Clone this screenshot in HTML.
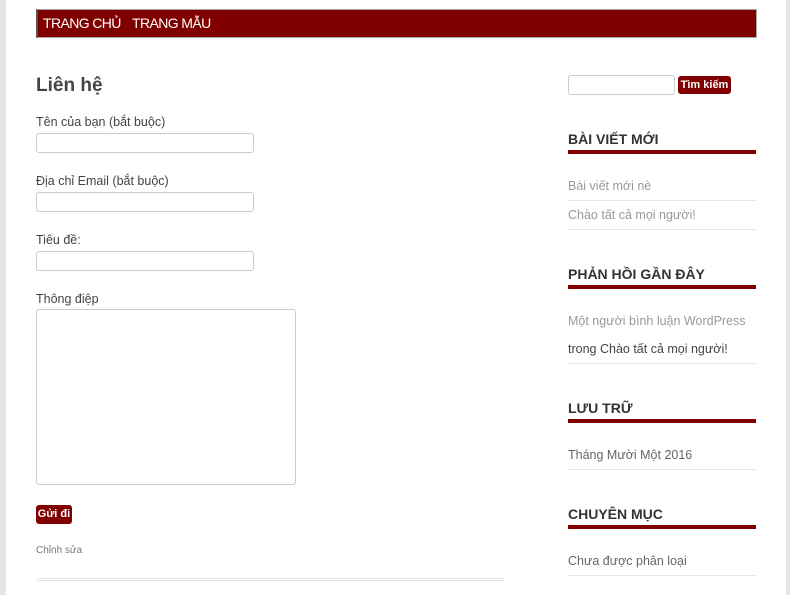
<!DOCTYPE html>
<html><head><meta charset="utf-8"><style>
*{margin:0;padding:0;box-sizing:border-box}
body{width:790px;height:595px;overflow:hidden;background:#fff;font-family:"Liberation Sans","DejaVu Sans",sans-serif;position:relative;color:#444}
.gl{position:absolute;left:0;top:0;width:6px;height:595px;background:#e6e6e6}
.gr{position:absolute;left:786px;top:0;width:4px;height:595px;background:#e6e6e6}
.nav{position:absolute;left:36px;top:9px;width:721px;height:29px;background:#800000;border:1px solid #aaa;border-left:2px solid #555}
.nav span{position:absolute;top:5px;color:#fff;font-size:14px;letter-spacing:-0.6px}
.a{position:absolute;white-space:nowrap}
.lbl{font-size:12.5px;color:#444}
.in{position:absolute;border:1px solid #ccc;border-radius:3px;background:#fff}
.btn{position:absolute;background:#800000;color:#fff;font-weight:bold;font-size:11px;border-radius:3px;text-align:center}
.h{font-size:14px;font-weight:bold;color:#333}
.bar{position:absolute;left:568px;width:188px;height:4px;background:#800000}
.ln{position:absolute;left:568px;width:188px;height:1px;background:#e6e6e6}
.li{font-size:12.5px}
</style></head><body>
<div class="gl"></div><div class="gr"></div>
<div class="nav"><span style="left:5px">TRANG CHỦ</span><span style="left:94px">TRANG MẪU</span></div>
<div class="a" style="left:36px;top:75px;font-size:19px;font-weight:bold;color:#444">Liên hệ</div>
<div class="a lbl" style="left:36px;top:115px">Tên của bạn (bắt buộc)</div>
<div class="in" style="left:36px;top:133px;width:218px;height:20px"></div>
<div class="a lbl" style="left:36px;top:174px">Địa chỉ Email (bắt buộc)</div>
<div class="in" style="left:36px;top:192px;width:218px;height:20px"></div>
<div class="a lbl" style="left:36px;top:233px">Tiêu đề:</div>
<div class="in" style="left:36px;top:251px;width:218px;height:20px"></div>
<div class="a lbl" style="left:36px;top:292px">Thông điệp</div>
<div class="in" style="left:36px;top:309px;width:260px;height:176px"></div>
<div class="btn" style="left:36px;top:505px;width:36px;height:19px;line-height:19px">Gửi đi</div>
<div class="a" style="left:36px;top:545px;font-size:10px;color:#777">Chỉnh sửa</div>
<div style="position:absolute;left:36px;top:578px;width:468px;height:3px;border-top:1px solid #e6e6e6;border-bottom:1px solid #e6e6e6"></div>

<div class="in" style="left:568px;top:75px;width:107px;height:20px"></div>
<div class="btn" style="left:678px;top:76px;width:53px;height:18px;line-height:18px">Tìm kiếm</div>

<div class="a h" style="left:568px;top:131px">BÀI VIẾT MỚI</div>
<div class="bar" style="top:150px"></div>
<div class="a li" style="left:568px;top:179px;color:#999">Bài viết mới nè</div>
<div class="ln" style="top:200px"></div>
<div class="a li" style="left:568px;top:208px;color:#999">Chào tất cả mọi người!</div>
<div class="ln" style="top:229px"></div>

<div class="a h" style="left:568px;top:266px">PHẢN HỒI GẦN ĐÂY</div>
<div class="bar" style="top:285px"></div>
<div class="a li" style="left:568px;top:314px;color:#999">Một người bình luận WordPress</div>
<div class="a li" style="left:568px;top:342px;color:#444">trong Chào tất cả mọi người!</div>
<div class="ln" style="top:363px"></div>

<div class="a h" style="left:568px;top:400px">LƯU TRỮ</div>
<div class="bar" style="top:419px"></div>
<div class="a li" style="left:568px;top:448px;color:#666">Tháng Mười Một 2016</div>
<div class="ln" style="top:469px"></div>

<div class="a h" style="left:568px;top:506px">CHUYÊN MỤC</div>
<div class="bar" style="top:525px"></div>
<div class="a li" style="left:568px;top:554px;color:#666">Chưa được phân loại</div>
<div class="ln" style="top:575px"></div>
</body></html>
